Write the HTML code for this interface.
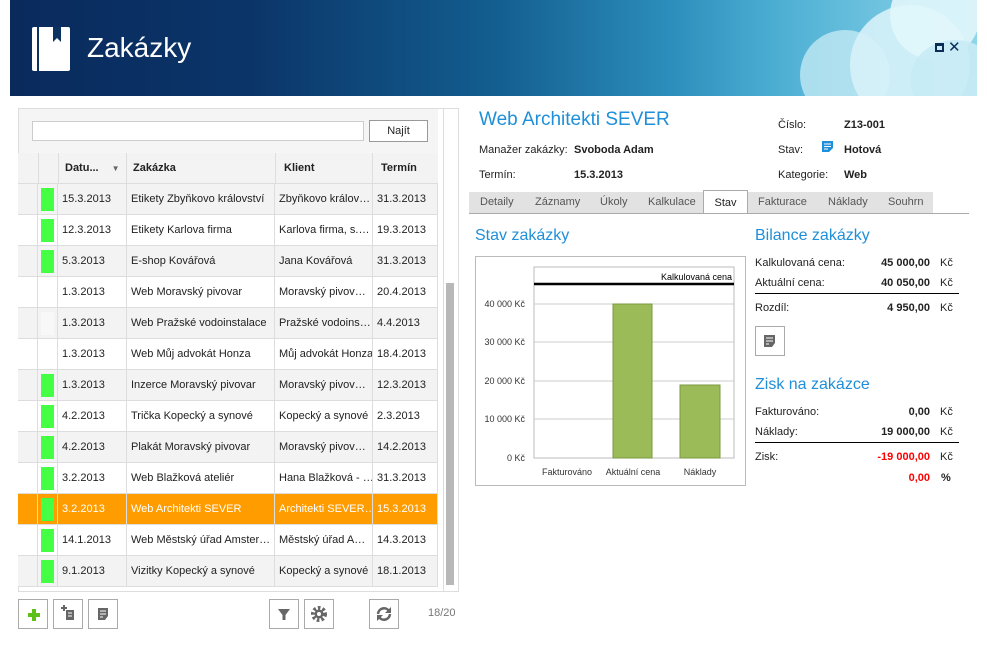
<!DOCTYPE html>
<html><head><meta charset="utf-8"><style>
*{margin:0;padding:0;box-sizing:border-box}
body{width:987px;height:647px;background:#fff;font-family:"Liberation Sans","DejaVu Sans",sans-serif;font-size:11px;color:#222;position:relative;overflow:hidden}
.abs{position:absolute}
#hdr{left:10px;top:0;width:967px;height:96px;background:linear-gradient(90deg,#0a2a5c 0%,#0b3569 25%,#135d8f 50%,#2b8dbb 68%,#4fb0d4 80%,#8ed6ea 100%);overflow:hidden}
.cloud{position:absolute;border-radius:50%}
.row{position:absolute;left:18px;width:420px;height:31px;border-bottom:1px solid #ddd}
.row>div{position:absolute;top:0;height:30px;line-height:30px;border-right:1px solid #ddd;white-space:nowrap;overflow:hidden;padding-left:4px;font-size:11px}
.btn{position:absolute;width:30px;height:30px;border:1px solid #aaa;background:#fff}
.lbl{position:absolute;font-size:11px}
.b{font-weight:bold}
.blue{color:#1e8fd8;font-size:16px}
.tab{position:absolute;top:192px;height:21px;line-height:21px;color:#555;font-size:11px}
</style></head><body>
<div id="hdr" class="abs">
 <div class="cloud" style="left:790px;top:30px;width:90px;height:90px;background:rgba(200,236,246,.75)"></div>
 <div class="cloud" style="left:840px;top:5px;width:120px;height:120px;background:rgba(215,242,249,.9)"></div>
 <div class="cloud" style="left:880px;top:-30px;width:90px;height:90px;background:rgba(225,246,251,.9)"></div>
 <div class="cloud" style="left:900px;top:40px;width:90px;height:80px;background:rgba(200,235,245,.9)"></div>
</div>
<svg class="abs" style="left:32px;top:27px" width="38" height="44" viewBox="0 0 38 44"><path d="M2 0h34a2 2 0 0 1 2 2v40a2 2 0 0 1-2 2H2a2 2 0 0 1-2-2V2a2 2 0 0 1 2-2z" fill="#fff"/><rect x="5" y="0" width="2" height="44" fill="#0c3262"/><path d="M21 0v15l4-4 4 4V0z" fill="#0c3262"/></svg>
<div class="abs" style="left:87px;top:32px;font-size:28px;color:#fff">Zakázky</div>
<div class="abs" style="left:935px;top:43px;width:9px;height:9px;border:2px solid #0c2b55;border-top-width:3px"></div>
<div class="abs" style="left:948px;top:38px;font-size:15px;font-weight:bold;color:#0c2b55">✕</div>

<div class="abs" style="left:18px;top:108px;width:441px;height:484px;border:1px solid #ddd"></div>
<div class="abs" style="left:19px;top:109px;width:419px;height:44px;background:#f5f5f5"></div>
<div class="abs" style="left:32px;top:121px;width:332px;height:20px;border:1px solid #ccc;background:#fff"></div>
<div class="abs" style="left:369px;top:120px;width:59px;height:22px;border:1px solid #999;background:#fff;text-align:center;line-height:20px">Najít</div>
<div class="abs" style="left:443px;top:109px;width:15px;height:482px;background:#fff;border-left:1px solid #ddd"></div>
<div class="abs" style="left:446px;top:283px;width:8px;height:302px;background:#b8b8b8"></div>
<div class="abs" style="left:18px;top:153px;width:420px;height:31px;background:#f3f3f3;border-bottom:1px solid #ddd;font-weight:bold">
 <div class="abs" style="left:20px;top:0;height:30px;border-left:1px solid #ddd"></div>
 <div class="abs" style="left:40px;top:0;width:69px;height:30px;border-left:1px solid #ddd;border-right:1px solid #ddd;line-height:30px;padding-left:6px">Datu... <span style="font-size:8px;color:#666;margin-left:10px">▼</span></div>
 <div class="abs" style="left:115px;top:0;line-height:30px">Zakázka</div>
 <div class="abs" style="left:257px;top:0;width:98px;height:30px;border-left:1px solid #ddd;border-right:1px solid #ddd;line-height:30px;padding-left:8px">Klient</div>
 <div class="abs" style="left:363px;top:0;line-height:30px">Termín</div>
</div>
<div id="rows"></div>
<script>
var d=[["15.3.2013","Etikety Zbyňkovo království","Zbyňkovo králov…","31.3.2013",1],
["12.3.2013","Etikety Karlova firma","Karlova firma, s.…","19.3.2013",1],
["5.3.2013","E-shop Kovářová","Jana Kovářová","31.3.2013",1],
["1.3.2013","Web Moravský pivovar","Moravský pivov…","20.4.2013",0],
["1.3.2013","Web Pražské vodoinstalace","Pražské vodoins…","4.4.2013",2],
["1.3.2013","Web Můj advokát Honza","Můj advokát Honza","18.4.2013",0],
["1.3.2013","Inzerce Moravský pivovar","Moravský pivov…","12.3.2013",1],
["4.2.2013","Trička Kopecký a synové","Kopecký a synové","2.3.2013",1],
["4.2.2013","Plakát Moravský pivovar","Moravský pivov…","14.2.2013",1],
["3.2.2013","Web Blažková ateliér","Hana Blažková - …","31.3.2013",1],
["3.2.2013","Web Architekti SEVER","Architekti SEVER…","15.3.2013",1],
["14.1.2013","Web Městský úřad Amster…","Městský úřad A…","14.3.2013",1],
["9.1.2013","Vizitky Kopecký a synové","Kopecký a synové","18.1.2013",1]];
var h="";
for(var i=0;i<d.length;i++){var r=d[i],t=184+i*31,sel=i==10;
var bg=sel?"#ff9c00":(i%2==0?"#f3f3f3":"#fff"),c=sel?"#fff":"#222";
var sq=r[4]==1?'<span style="position:absolute;left:3px;top:4px;width:13px;height:23px;background:#44ff44"></span>':(r[4]==2?'<span style="position:absolute;left:3px;top:4px;width:13px;height:23px;background:#f8f8f8"></span>':'');
h+='<div class="row" style="top:'+t+'px;background:'+bg+';color:'+c+'"><div style="left:0;width:20px;padding:0"></div><div style="left:20px;width:20px;padding:0">'+sq+'</div><div style="left:40px;width:69px">'+r[0]+'</div><div style="left:109px;width:148px">'+r[1]+'</div><div style="left:257px;width:98px">'+r[2]+'</div><div style="left:355px;width:65px">'+r[3]+'</div></div>';}
document.getElementById("rows").innerHTML=h;
</script>
<div class="btn" style="left:18px;top:599px"><div class="abs" style="left:9px;top:13px;width:12px;height:4px;background:#5cbf1c"></div><div class="abs" style="left:13px;top:9px;width:4px;height:12px;background:#5cbf1c"></div></div>
<div class="btn" style="left:53px;top:599px"><svg width="28" height="28"><path d="M7 8h6M10 5v6" stroke="#666" stroke-width="2"/><rect x="12" y="10" width="8" height="10" fill="#666"/><path d="M14 13h4M14 16h4" stroke="#fff"/></svg></div>
<div class="btn" style="left:88px;top:599px"><svg width="28" height="28"><path d="M9 8h10v8l-3 4H9z" fill="#666"/><path d="M11 11h6M11 14h6M11 17h3" stroke="#fff"/></svg></div>
<div class="btn" style="left:269px;top:599px"><svg width="28" height="28"><path d="M8 9h12l-4.5 6v5h-3v-5z" fill="#666"/></svg></div>
<div class="btn" style="left:304px;top:599px"><svg width="28" height="28"><circle cx="14" cy="14" r="6" fill="none" stroke="#666" stroke-width="4" stroke-dasharray="2.5 2"/><circle cx="14" cy="14" r="4.5" fill="#666"/><circle cx="14" cy="14" r="2" fill="#fff"/></svg></div>
<div class="btn" style="left:369px;top:599px"><svg width="28" height="28"><path d="M8 14a6 6 0 0 1 11-3M20 14a6 6 0 0 1-11 3" fill="none" stroke="#666" stroke-width="2.5"/><path d="M21 7v6h-6zM7 21v-6h6z" fill="#666"/></svg></div>
<div class="abs" style="left:428px;top:607px;color:#777">18/20</div>

<div class="abs" style="left:479px;top:109px;font-size:19px;color:#1e8fd8">Web Architekti SEVER</div>
<div class="lbl" style="left:479px;top:144px">Manažer zakázky:</div><div class="lbl b" style="left:574px;top:144px">Svoboda Adam</div>
<div class="lbl" style="left:479px;top:169px">Termín:</div><div class="lbl b" style="left:574px;top:169px">15.3.2013</div>
<div class="lbl" style="left:778px;top:119px">Číslo:</div><div class="lbl b" style="left:844px;top:119px">Z13-001</div>
<div class="lbl" style="left:778px;top:144px">Stav:</div><div class="lbl b" style="left:844px;top:144px">Hotová</div>
<svg class="abs" style="left:822px;top:141px" width="12" height="12"><path d="M0 0h11v7l-4 4H0z" fill="#1e8fd8"/><path d="M2 3h7M2 5.5h7M2 8h4" stroke="#fff"/></svg>
<div class="lbl" style="left:778px;top:169px">Kategorie:</div><div class="lbl b" style="left:844px;top:169px">Web</div>
<div class="abs" style="left:469px;top:192px;width:464px;height:21px;background:#e2e2e2"></div>
<div class="abs" style="left:469px;top:213px;width:500px;height:1px;background:#aaa"></div>
<div class="tab" style="left:480px">Detaily</div><div class="tab" style="left:535px">Záznamy</div><div class="tab" style="left:600px">Úkoly</div><div class="tab" style="left:648px">Kalkulace</div>
<div class="tab" style="left:703px;width:45px;height:23px;top:190px;background:#fff;border:1px solid #aaa;border-bottom:none;text-align:center;color:#222;line-height:24px">Stav</div>
<div class="tab" style="left:758px">Fakturace</div><div class="tab" style="left:828px">Náklady</div><div class="tab" style="left:888px">Souhrn</div>

<div class="abs blue" style="left:475px;top:227px">Stav zakázky</div>
<div class="abs" style="left:475px;top:256px;width:271px;height:230px;border:1px solid #bbb"></div>
<svg class="abs" style="left:476px;top:257px" width="269" height="228" font-family="Liberation Sans,sans-serif" font-size="9" fill="#333">
 <rect x="58" y="10" width="200" height="191" fill="none" stroke="#bbb"/>
 <g stroke="#ccc"><line x1="58" y1="47" x2="258" y2="47"/><line x1="58" y1="85" x2="258" y2="85"/><line x1="58" y1="124" x2="258" y2="124"/><line x1="58" y1="162" x2="258" y2="162"/></g>
 <g text-anchor="end"><text x="49" y="50">40 000 Kč</text><text x="49" y="88">30 000 Kč</text><text x="49" y="127">20 000 Kč</text><text x="49" y="165">10 000 Kč</text><text x="49" y="204">0 Kč</text></g>
 <rect x="137" y="47" width="39" height="154" fill="#9bbb59" stroke="#7a9a40"/>
 <rect x="204" y="128" width="40" height="73" fill="#9bbb59" stroke="#7a9a40"/>
 <line x1="58" y1="27" x2="258" y2="27" stroke="#000" stroke-width="2.5"/>
 <text x="256" y="23" text-anchor="end" fill="#000">Kalkulovaná cena</text>
 <g text-anchor="middle"><text x="91" y="218">Fakturováno</text><text x="157" y="218">Aktuální cena</text><text x="224" y="218">Náklady</text></g>
</svg>

<div class="abs blue" style="left:755px;top:227px">Bilance zakázky</div>
<div class="lbl" style="left:755px;top:257px">Kalkulovaná cena:</div><div class="lbl b" style="left:830px;top:257px;width:100px;text-align:right">45 000,00</div><div class="lbl" style="left:940px;top:257px">Kč</div>
<div class="lbl" style="left:755px;top:277px">Aktuální cena:</div><div class="lbl b" style="left:830px;top:277px;width:100px;text-align:right">40 050,00</div><div class="lbl" style="left:940px;top:277px">Kč</div>
<div class="abs" style="left:755px;top:293px;width:204px;height:1px;background:#000"></div>
<div class="lbl" style="left:755px;top:302px">Rozdíl:</div><div class="lbl b" style="left:830px;top:302px;width:100px;text-align:right">4 950,00</div><div class="lbl" style="left:940px;top:302px">Kč</div>
<div class="btn" style="left:755px;top:326px"><svg width="28" height="28"><path d="M8 8h11v8l-3 4H8z" fill="#666"/><path d="M10 11h7M10 14h7M10 17h3" stroke="#fff"/></svg></div>
<div class="abs blue" style="left:755px;top:376px">Zisk na zakázce</div>
<div class="lbl" style="left:755px;top:406px">Fakturováno:</div><div class="lbl b" style="left:830px;top:406px;width:100px;text-align:right">0,00</div><div class="lbl" style="left:940px;top:406px">Kč</div>
<div class="lbl" style="left:755px;top:426px">Náklady:</div><div class="lbl b" style="left:830px;top:426px;width:100px;text-align:right">19 000,00</div><div class="lbl" style="left:940px;top:426px">Kč</div>
<div class="abs" style="left:755px;top:442px;width:204px;height:1px;background:#000"></div>
<div class="lbl" style="left:755px;top:451px">Zisk:</div><div class="lbl b" style="left:830px;top:451px;width:100px;text-align:right;color:#f00">-19 000,00</div><div class="lbl" style="left:940px;top:451px">Kč</div>
<div class="lbl b" style="left:830px;top:472px;width:100px;text-align:right;color:#f00">0,00</div><div class="lbl b" style="left:941px;top:472px">%</div>
</body></html>
